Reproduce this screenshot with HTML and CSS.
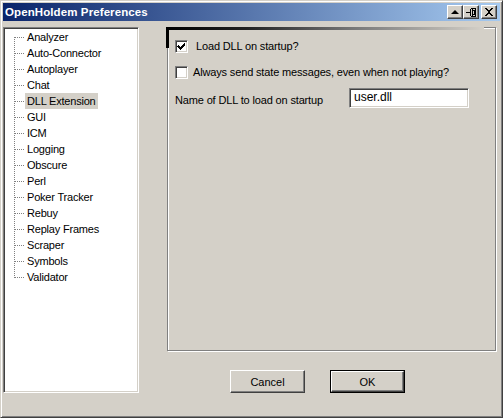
FILE: index.html
```html
<!DOCTYPE html>
<html>
<head>
<meta charset="utf-8">
<link rel="stylesheet" href="styles.css">
</head>
<body>
<div class="window">
  <div class="titlebar">
    <span class="title">OpenHoldem Preferences</span>
    <div class="tbtns">
      <span class="tbtn"><svg width="12" height="10" viewBox="0 0 12 10"><path d="M2 7 L10 7 L6 3 Z" fill="#000"/></svg></span>
      <span class="tbtn"><svg width="12" height="10" viewBox="0 0 12 10" shape-rendering="crispEdges"><path d="M1 5h4M5 2v7M6 1h4v8h-4M7 1v8M10 1v8M8 3h1v4h-1" stroke="#000" fill="none"/></svg></span>
      <span class="tbtn tclose"><svg width="12" height="10" viewBox="0 0 12 10" shape-rendering="crispEdges"><path d="M2 1h2v1h1v1h2v-1h1v-1h2v1h-1v1h-1v1h-1v2h1v1h1v1h1v1h-2v-1h-1v-1h-2v1h-1v1h-2v-1h1v-1h1v-1h1v-2h-1v-1h-1v-1h-1z" fill="#000"/></svg></span>
    </div>
  </div>
  <div class="content">
    <div class="tree">
      <ul class="items">
        <li><span class="lbl">Analyzer</span></li>
        <li><span class="lbl">Auto-Connector</span></li>
        <li><span class="lbl">Autoplayer</span></li>
        <li><span class="lbl">Chat</span></li>
        <li><span class="lbl sel">DLL Extension</span></li>
        <li><span class="lbl">GUI</span></li>
        <li><span class="lbl">ICM</span></li>
        <li><span class="lbl">Logging</span></li>
        <li><span class="lbl">Obscure</span></li>
        <li><span class="lbl">Perl</span></li>
        <li><span class="lbl">Poker Tracker</span></li>
        <li><span class="lbl">Rebuy</span></li>
        <li><span class="lbl">Replay Frames</span></li>
        <li><span class="lbl">Scraper</span></li>
        <li><span class="lbl">Symbols</span></li>
        <li><span class="lbl">Validator</span></li>
      </ul>
    </div>
    <div class="right">
      <div class="panel">
        <div class="cap-top"></div>
        <div class="cap-left"></div>
        <div class="row row1">
          <span class="cb"><svg width="9" height="9" viewBox="0 0 9 9" shape-rendering="crispEdges"><path d="M1 3h1v1h1v1h1v-1h1v-1h1v-1h1v-1h1v3h-1v1h-1v1h-1v1h-1v1h-1v-1h-1v-1h-1v-1h-1z" fill="#000"/></svg></span>
          <span class="cblbl first">Load DLL on startup?</span>
        </div>
        <div class="row row2">
          <span class="cb"></span>
          <span class="cblbl">Always send state messages, even when not playing?</span>
        </div>
        <div class="row row3">
          <span class="namelbl">Name of DLL to load on startup</span>
          <span class="input">user.dll</span>
        </div>
      </div>
      <div class="buttons">
        <span class="btn">Cancel</span>
        <span class="btn def"><span class="btn-in">OK</span></span>
      </div>
    </div>
  </div>
</div>
</body>
</html>
```
FILE: styles.css
```css
html, body {
  margin: 0;
  padding: 0;
  background: #d4d0c8;
}
body {
  font-family: "Liberation Sans", Arial, sans-serif;
  font-size: 11px;
  color: #000;
}
.window {
  width: 503px;
  height: 418px;
  box-sizing: border-box;
  background: #d4d0c8;
  border: 1px solid;
  border-color: #d4d0c8 #404040 #404040 #d4d0c8;
  box-shadow: inset 1px 1px 0 #fff, inset -1px -1px 0 #808080;
  padding: 2px;
  display: flex;
  flex-direction: column;
}
.titlebar {
  height: 18px;
  flex: none;
  background: linear-gradient(to right, #0a246a, #a6caf0);
  display: flex;
  align-items: center;
  justify-content: space-between;
  padding: 0 3px 0 2px;
}
.title {
  color: #fff;
  font-weight: bold;
  font-size: 11.5px;
  letter-spacing: 0.1px;
}
.tbtns {
  display: flex;
  align-items: center;
}
.tbtn {
  width: 16px;
  height: 14px;
  box-sizing: border-box;
  background: #d4d0c8;
  border: 1px solid;
  border-color: #fff #404040 #404040 #fff;
  box-shadow: inset -1px -1px 0 #808080;
  display: flex;
  align-items: center;
  justify-content: center;
}
.tclose {
  margin-left: 2px;
}
.content {
  display: flex;
  padding-top: 6px;
}
.tree {
  width: 136px;
  height: 366px;
  box-sizing: border-box;
  background: #fff;
  border: 1px solid;
  border-color: #808080 #fff #fff #808080;
  box-shadow: inset 1px 1px 0 #404040, inset -1px -1px 0 #d4d0c8;
  padding: 1px;
}
.items {
  list-style: none;
  margin: 0;
  padding: 0;
  background-image: repeating-linear-gradient(to bottom, #808080 0 1px, transparent 1px 2px);
  background-repeat: no-repeat;
  background-size: 1px 241px;
  background-position: 9px 8px;
}
.items li {
  height: 16px;
  display: flex;
  align-items: center;
}
.items li::before {
  content: "";
  width: 10px;
  height: 1px;
  margin-left: 10px;
  background: repeating-linear-gradient(to right, #808080 0 1px, transparent 1px 2px);
  flex: none;
}
.lbl {
  height: 16px;
  line-height: 16px;
  padding: 0 2px;
  letter-spacing: -0.2px;
}
.sel {
  background: #d4d0c8;
}
.right {
  margin-left: 28px;
  display: flex;
  flex-direction: column;
}
.panel {
  position: relative;
  width: 329px;
  height: 324px;
  box-sizing: border-box;
  border: 1px solid #808080;
  box-shadow: inset 1px 1px 0 #fff, 1px 1px 0 #fff;
  padding: 12px 0 0 7px;
}
.cap-top {
  position: absolute;
  left: -2px;
  top: -1px;
  width: 318px;
  height: 3px;
  background: linear-gradient(to right, #000 0%, #202020 25%, #7a7a7a 60%, #d4d0c8 100%);
}
.cap-left {
  position: absolute;
  left: -2px;
  top: -1px;
  width: 3px;
  height: 21px;
  background: #000;
}
.row {
  display: flex;
  align-items: center;
}
.row1, .row2 {
  height: 13px;
}
.row1 {
  margin-bottom: 13px;
}
.cb {
  width: 13px;
  height: 13px;
  box-sizing: border-box;
  background: #fff;
  border: 1px solid;
  border-color: #808080 #fff #fff #808080;
  box-shadow: inset 1px 1px 0 #404040, inset -1px -1px 0 #d4d0c8;
  display: flex;
  align-items: center;
  justify-content: center;
  flex: none;
}
.cblbl {
  margin-left: 5px;
  line-height: 13px;
  letter-spacing: -0.15px;
}
.cblbl.first {
  margin-left: 8px;
}
.row3 {
  margin-top: 9px;
  align-items: flex-start;
}
.namelbl {
  margin-top: 6px;
  width: 174px;
  letter-spacing: -0.15px;
}
.input {
  width: 120px;
  height: 20px;
  box-sizing: border-box;
  background: #fff;
  border: 1px solid;
  border-color: #808080 #fff #fff #808080;
  box-shadow: inset 1px 1px 0 #404040, inset -1px -1px 0 #d4d0c8;
  padding: 0 4px;
  line-height: 17px;
  font-size: 12px;
}
.buttons {
  display: flex;
  gap: 25px;
  margin-top: 19px;
  padding-left: 63px;
}
.btn {
  width: 75px;
  height: 23px;
  box-sizing: border-box;
  border: 1px solid;
  border-color: #fff #404040 #404040 #fff;
  box-shadow: inset -1px -1px 0 #808080;
  display: flex;
  align-items: center;
  justify-content: center;
  font-size: 11px;
}
.btn.def {
  border: 1px solid #000;
  box-shadow: none;
  padding: 0;
}
.btn-in {
  width: 100%;
  height: 100%;
  box-sizing: border-box;
  border: 1px solid;
  border-color: #fff #404040 #404040 #fff;
  box-shadow: inset -1px -1px 0 #808080;
  display: flex;
  align-items: center;
  justify-content: center;
}
```
